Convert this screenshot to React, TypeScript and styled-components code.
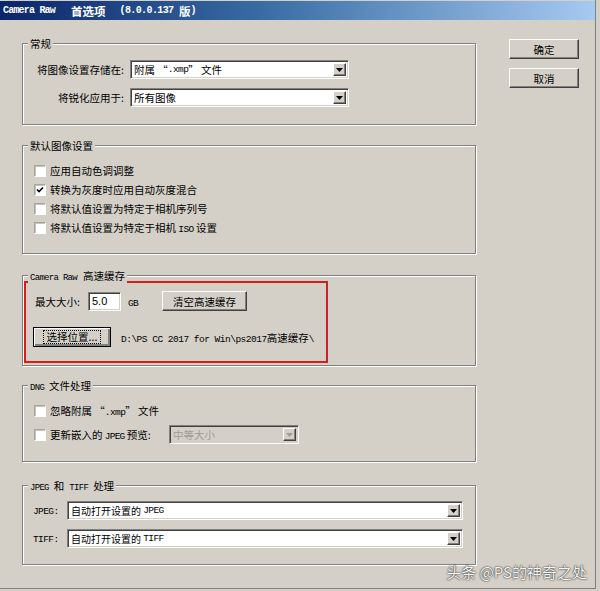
import React from 'react';
import styled, { createGlobalStyle } from 'styled-components';

const GlobalStyle = createGlobalStyle`
  html, body { margin: 0; padding: 0; background: #d4d0c8; }
  body {
    font-family: "Noto Sans CJK SC", "Noto Sans", sans-serif;
    font-size: 10.5px;
    color: #000;
  }
`;

const Window = styled.div`
  position: relative;
  box-sizing: border-box;
  width: 596px;
  height: 589px;
  padding-top: 1px;
  border-right: 1px solid #808080;
  border-bottom: 1px solid #808080;
  background: #d4d0c8;
`;

const TitleBar = styled.div`
  height: 19px;
  display: flex;
  align-items: center;
  padding-left: 3px;
  background: linear-gradient(to right, #0a246a 0%, #3a6ea5 45%, #a6caf0 100%);
  color: #fff;
  font-weight: bold;
  white-space: pre;
`;

const L = styled.span<{ $s?: number; $ml?: number; $ls?: number }>`
  font-family: "Liberation Mono", "DejaVu Sans Mono", monospace;
  font-size: ${p => p.$s ?? 9.5}px;
  letter-spacing: ${p => p.$ls ?? -0.6}px;
  margin-left: ${p => p.$ml ?? 0}px;
`;

const C = styled.span<{ $s?: number; $ml?: number }>`
  font-family: "Noto Sans CJK SC", sans-serif;
  font-size: ${p => p.$s ?? 10.5}px;
  margin-left: ${p => p.$ml ?? 0}px;
`;

const Body = styled.div`
  display: flex;
  padding-left: 22px;
`;

const Main = styled.div`
  width: 454px;
  margin-top: 23px;
`;

const Side = styled.div`
  margin-left: 33px;
  padding-top: 19px;
  display: flex;
  flex-direction: column;
  gap: 9px;
`;

const Group = styled.div<{ $h: number; $mt?: number }>`
  position: relative;
  box-sizing: border-box;
  height: ${p => p.$h}px;
  margin-top: ${p => p.$mt ?? 0}px;
  border: 1px solid #808080;
  box-shadow: 1px 1px 0 #fff, inset 1px 1px 0 #fff;
`;

const Legend = styled.div`
  position: absolute;
  top: -8px;
  left: 5px;
  padding: 0 2px;
  line-height: 15px;
  background: #d4d0c8;
  white-space: pre;
`;

const FormGrid = styled.div<{ $cols: string; $pt: number; $pl: number; $gap: number }>`
  display: grid;
  grid-template-columns: ${p => p.$cols};
  grid-auto-rows: 19px;
  column-gap: ${p => p.$gap}px;
  row-gap: 9px;
  padding: ${p => p.$pt}px 0 0 ${p => p.$pl}px;
  align-items: center;
`;

const Label = styled.div<{ $align?: string }>`
  text-align: ${p => p.$align ?? 'right'};
  white-space: pre;
  line-height: 19px;
`;

const SelectBox = styled.div<{ $w: number; $disabled?: boolean; $fs?: number }>`
  box-sizing: border-box;
  width: ${p => p.$w}px;
  height: 19px;
  display: flex;
  align-items: stretch;
  background: ${p => (p.$disabled ? '#d4d0c8' : '#fff')};
  color: ${p => (p.$disabled ? '#a09c94' : '#000')};
  border: 1px solid;
  border-color: #808080 #fff #fff #808080;
  box-shadow: inset 1px 1px 0 #404040, inset -1px -1px 0 #d4d0c8;
  padding: 2px;
  font-size: ${p => p.$fs ?? 10.5}px;
`;

const SelectValue = styled.div`
  flex: 1;
  display: flex;
  align-items: center;
  padding-left: 1px;
  white-space: pre;
  overflow: hidden;
`;

const ArrowBtn = styled.div`
  box-sizing: border-box;
  width: 13px;
  display: flex;
  align-items: center;
  justify-content: center;
  background: #d4d0c8;
  border: 1px solid;
  border-color: #fff #404040 #404040 #fff;
  box-shadow: inset -1px -1px 0 #808080;
`;

const Select: React.FC<{ w: number; disabled?: boolean; fs?: number; children: React.ReactNode }> = ({
  w,
  disabled,
  fs,
  children,
}) => (
  <SelectBox $w={w} $disabled={disabled} $fs={fs}>
    <SelectValue>{children}</SelectValue>
    <ArrowBtn>
      <svg width="7" height="4" viewBox="0 0 7 4">
        <polygon points="0,0 7,0 3.5,4" fill={disabled ? '#a09c94' : '#000'} />
      </svg>
    </ArrowBtn>
  </SelectBox>
);

const Button = styled.button<{ $w: number; $focus?: boolean }>`
  box-sizing: border-box;
  width: ${p => p.$w}px;
  height: 20px;
  padding: 0;
  display: flex;
  align-items: center;
  justify-content: center;
  background: #d4d0c8;
  color: #000;
  font-family: "Noto Sans CJK SC", sans-serif;
  font-size: 10.5px;
  border: 1px solid;
  border-color: ${p => (p.$focus ? '#000' : '#fff #404040 #404040 #fff')};
  box-shadow: ${p =>
    p.$focus ? 'inset 1px 1px 0 #fff, inset -2px -2px 0 #808080' : 'inset -1px -1px 0 #808080'};
`;

const FocusRing = styled.span`
  padding: 0 3px;
  border: 1px dotted #000;
  line-height: 12px;
`;

const CheckList = styled.div<{ $pt: number; $gap: number }>`
  display: flex;
  flex-direction: column;
  gap: ${p => p.$gap}px;
  padding: ${p => p.$pt}px 0 0 11px;
`;

const CheckRow = styled.div`
  display: flex;
  align-items: center;
  height: 19px;
  gap: 4px;
  white-space: pre;
`;

const Box = styled.span`
  box-sizing: border-box;
  width: 12px;
  height: 12px;
  flex: none;
  display: flex;
  align-items: center;
  justify-content: center;
  background: #fff;
  border: 1px solid;
  border-color: #a8a49c #fff #fff #a8a49c;
  box-shadow: inset 1px 1px 0 #c8c4bc;
`;

const CheckText = styled.span<{ $w?: number }>`
  ${p => (p.$w ? `width: ${p.$w}px;` : '')}
`;

const Check: React.FC<{ checked?: boolean }> = ({ checked }) => (
  <Box>
    {checked && (
      <svg width="8" height="8" viewBox="0 0 8 8">
        <path d="M1 3.5 L3 5.5 L7 1.5" stroke="#000" strokeWidth="1.6" fill="none" />
      </svg>
    )}
  </Box>
);

const Highlight = styled.div`
  box-sizing: border-box;
  width: 304px;
  height: 82px;
  margin: 5px 0 0 1px;
  border: 2px solid #d41f1f;
  padding: 8px 0 0 7px;
  display: flex;
  flex-direction: column;
  gap: 16px;
`;

const CacheRow = styled.div`
  display: flex;
  align-items: center;
  height: 20px;
  white-space: pre;
`;

const FieldLabel = styled.span`
  width: 53px;
  margin-left: 2px;
`;

const TextInput = styled.div`
  box-sizing: border-box;
  width: 33px;
  height: 19px;
  padding: 0 3px;
  display: flex;
  align-items: center;
  background: #fff;
  border: 1px solid;
  border-color: #808080 #fff #fff #808080;
  box-shadow: inset 1px 1px 0 #404040, inset -1px -1px 0 #d4d0c8;
  font-family: "Liberation Sans", sans-serif;
  font-size: 11px;
`;

const Unit = styled.span`
  width: 34px;
  margin-left: 7px;
`;

const PathText = styled.span`
  margin-left: 10px;
`;

const Watermark = styled.div`
  position: absolute;
  right: 8px;
  bottom: 9px;
  font-family: "Noto Sans CJK SC", sans-serif;
  font-size: 15px;
  line-height: 1;
  color: #f4f4f4;
  text-shadow: 0 0 2px rgba(0, 0, 0, 0.7), 0 0 1px rgba(0, 0, 0, 0.8);
`;

export default function App() {
  return (
    <>
      <GlobalStyle />
      <Window>
        <TitleBar>
          <L $s={10} $ls={-0.8}>Camera Raw</L>
          <C $s={11.5} $ml={16}>首选项</C>
          <L $s={10} $ls={-0.6} $ml={14}>(8.0.0.137 </L>
          <C $s={11.5}>版</C>
          <L $s={10}>)</L>
        </TitleBar>
        <Body>
          <Main>
            <Group $h={82}>
              <Legend>常规</Legend>
              <FormGrid $cols="91px 219px" $pt={16} $pl={10} $gap={6}>
                <Label>将图像设置存储在:</Label>
                <Select w={219}>
                  附属 “<L>.xmp</L>” 文件
                </Select>
                <Label>将锐化应用于:</Label>
                <Select w={219}>所有图像</Select>
              </FormGrid>
            </Group>

            <Group $h={109} $mt={20}>
              <Legend>默认图像设置</Legend>
              <CheckList $pt={15} $gap={0}>
                <CheckRow>
                  <Check />
                  <CheckText>应用自动色调调整</CheckText>
                </CheckRow>
                <CheckRow>
                  <Check checked />
                  <CheckText>转换为灰度时应用自动灰度混合</CheckText>
                </CheckRow>
                <CheckRow>
                  <Check />
                  <CheckText>将默认值设置为特定于相机序列号</CheckText>
                </CheckRow>
                <CheckRow>
                  <Check />
                  <CheckText>
                    将默认值设置为特定于相机 <L>ISO</L> 设置
                  </CheckText>
                </CheckRow>
              </CheckList>
            </Group>

            <Group $h={91} $mt={21}>
              <Legend>
                <L $s={9} $ls={-0.7}>Camera Raw</L>
                <C $ml={6}>高速缓存</C>
              </Legend>
              <Highlight>
                <CacheRow>
                  <FieldLabel>最大大小:</FieldLabel>
                  <TextInput>5.0</TextInput>
                  <Unit>
                    <L>GB</L>
                  </Unit>
                  <Button $w={85}>清空高速缓存</Button>
                </CacheRow>
                <CacheRow>
                  <Button $w={78} $focus>
                    <FocusRing>选择位置...</FocusRing>
                  </Button>
                  <PathText>
                    <L $ls={-0.5}>{'D:\\PS CC 2017 for Win\\ps2017'}</L>
                    高速缓存
                    <L>{'\\'}</L>
                  </PathText>
                </CacheRow>
              </Highlight>
            </Group>

            <Group $h={77} $mt={19}>
              <Legend>
                <L $s={9} $ls={-0.7}>DNG</L>
                <C $ml={5}>文件处理</C>
              </Legend>
              <CheckList $pt={15} $gap={5}>
                <CheckRow>
                  <Check />
                  <CheckText>
                    忽略附属 “<L>.xmp</L>” 文件
                  </CheckText>
                </CheckRow>
                <CheckRow>
                  <Check />
                  <CheckText $w={115}>
                    更新嵌入的 <L $ls={-0.8}>JPEG</L> 预览:
                  </CheckText>
                  <Select w={130} disabled>
                    中等大小
                  </Select>
                </CheckRow>
              </CheckList>
            </Group>

            <Group $h={80} $mt={23}>
              <Legend>
                <L $s={9} $ls={-0.7}>JPEG</L>
                <C $ml={5}>和</C>
                <L $s={9} $ls={-0.7} $ml={5}>TIFF</L>
                <C $ml={5}>处理</C>
              </Legend>
              <FormGrid $cols="34px 396px" $pt={15} $pl={10} $gap={0}>
                <Label $align="left">
                  <L>JPEG:</L>
                </Label>
                <Select w={396} fs={10}>
                  自动打开设置的 <L>JPEG</L>
                </Select>
                <Label $align="left">
                  <L>TIFF:</L>
                </Label>
                <Select w={396} fs={10}>
                  自动打开设置的 <L>TIFF</L>
                </Select>
              </FormGrid>
            </Group>
          </Main>

          <Side>
            <Button $w={70}>确定</Button>
            <Button $w={70}>取消</Button>
          </Side>
        </Body>
        <Watermark>头条 @PS的神奇之处</Watermark>
      </Window>
    </>
  );
}
